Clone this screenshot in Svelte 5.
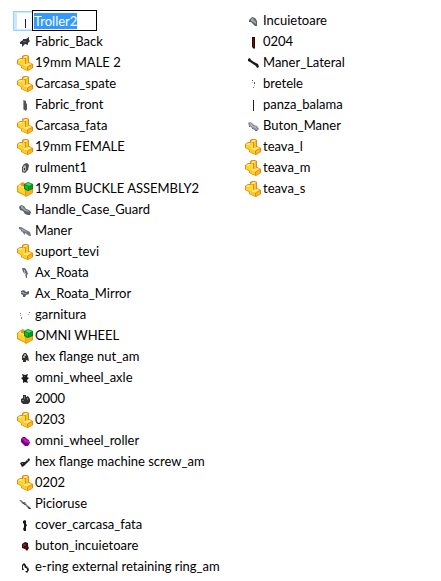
<script lang="ts">
  import { onMount } from 'svelte'

  type Shape = { d: string; fill: string }
  type Item = { name: string; icon: string }

  const icons: Record<string, Shape[]> = {
    part: [
      { d: 'M0 5L3 3H5V1L7 0H10L12 1V7L16 9V13L11 16L8 15L4 13V11L0 9Z', fill: '#e08c10' },
      { d: 'M1 5L5 4L8 4V10H5V12L4 10L1 9Z', fill: '#ffd32f' },
      { d: 'M1 5L4 4H5V5L3 6Z', fill: '#fff0a8' },
      { d: 'M6 2L8 1H10L11 2L9 3H7Z', fill: '#fff0a8' },
      { d: 'M6 3L8 4V9L6 8Z', fill: '#ffdc45' },
      { d: 'M9 3L11 2V8L9 9Z', fill: '#fdc422' },
      { d: 'M5 10L8 9L12 8L15 9L11 11L10 12Z', fill: '#ffe878' },
      { d: 'M5 10L10 12V15L5 13Z', fill: '#ffcc22' },
      { d: 'M11 12L15 10V13L11 15Z', fill: '#ffb81a' }
    ],
    assembly: [
      { d: 'M0 5L4 2L6 1L8 3L12 2L16 4V12L9 16L8 15L0 11Z', fill: '#e39a10' },
      { d: 'M1 5L8 8V14L1 10Z', fill: '#ffd52e' },
      { d: 'M1 5L4 3V5L8 6V8Z', fill: '#fff08c' },
      { d: 'M9 10L15 8V12L9 15Z', fill: '#fbb017' },
      { d: 'M7 3L11 1L16 3V8L11 10L7 8Z', fill: '#07851b' },
      { d: 'M8 3L11 2L15 3L12 5Z', fill: '#42e163' },
      { d: 'M8 4L11 5V9L8 7Z', fill: '#12b936' },
      { d: 'M12 5L15 4V7L12 9Z', fill: '#079b25' }
    ],
    trolley: [{ d: 'M8 6H9V15H8Z', fill: '#222222' }],
    blade: [{ d: 'M8 3H9V14H8Z', fill: '#222222' }],
    fabricBack: [
      { d: 'M3 8L6 6V5H9L12 3V6L13 7L11 9V11L8 10L5 13V10H3Z', fill: '#30343c' },
      { d: 'M6 7H9V8H6Z', fill: '#646b78' }
    ],
    fabricFront: [
      { d: 'M6 3L9 4V6L10 7V12L9 14L6 12Z', fill: '#50545e' },
      { d: 'M6 3H7V12H6Z', fill: '#9599a5' }
    ],
    bearing: [
      { d: 'M5 7L7 4L10 3L12 5L11 10L8 13L5 12Z', fill: '#4d4d4d' },
      { d: 'M6 7L8 5L9 6V10L7 12L6 11Z', fill: '#b9b9b9' },
      { d: 'M7 8H8V10H7Z', fill: '#333333' }
    ],
    guard: [
      { d: 'M2 5L4 3L7 4L9 7L12 8L14 10L13 13H11L8 12L6 9L3 8Z', fill: '#5d606e' },
      { d: 'M4 4H6V5L9 8L12 9V10L8 9L4 6Z', fill: '#a3a7b5' }
    ],
    handle: [
      { d: 'M2 4H4L6 5L9 7L13 9L14 13H12L11 12L8 10V12L6 10L5 8L4 9V7L2 6Z', fill: '#747786' },
      { d: 'M4 5L7 7L11 10L9 9L5 7Z', fill: '#b2b5c0' }
    ],
    axle: [
      { d: 'M5 3L8 3L10 6L11 9L10 10V13H9L8 9L6 7Z', fill: '#686c79' },
      { d: 'M7 5H8V8H9V10H8V8H7Z', fill: '#b2b6bf' }
    ],
    axleMirror: [
      { d: 'M4 5L7 4L9 6L12 5V8L9 9L8 11H6V9L4 8Z', fill: '#5c606c' },
      { d: 'M4 6H7V7H9V8H6V7H4Z', fill: '#989ca8' }
    ],
    gasket: [
      { d: 'M3 6H4V7H3ZM4 10H5V12H4ZM12 5H13V6H12Z', fill: '#777777' },
      { d: 'M3 8H4V9H3ZM11 7H12V8H11Z', fill: '#a4a4a4' }
    ],
    nut: [
      { d: 'M5 7L7 4H9L11 7L12 12L9 11V13H6V11H5Z', fill: '#343330' },
      { d: 'M7 5H9V7H8V9H6V7H7Z', fill: '#a2a199' }
    ],
    wheelAxle: [
      { d: 'M5 4L8 5L11 4L10 7L12 8L10 10L11 13L8 12L6 13V10L4 8L6 7Z', fill: '#191b1b' },
      { d: 'M7 6H8V7H7Z', fill: '#555858' }
    ],
    roller2000: [
      { d: 'M4 8L6 7V4H9V6L11 5L13 8V11L11 13H6L4 11Z', fill: '#303332' },
      { d: 'M7 5H8V8H7ZM5 9H7V10H5ZM10 7H11V9H10Z', fill: '#737877' }
    ],
    purple: [
      { d: 'M4 6L6 4H8L10 6L12 7L13 10L11 13H8L5 10L4 9Z', fill: '#780084' },
      { d: 'M5 6L7 5L10 7L12 8V10L8 9Z', fill: '#c813d0' }
    ],
    screw: [
      { d: 'M3 9L5 8L8 8L10 6L12 4L13 6L10 9L8 11L7 12L5 13L4 11Z', fill: '#202221' },
      { d: 'M5 9H6V10H5ZM10 6H11V7H10Z', fill: '#7d807e' }
    ],
    feet: [
      { d: 'M2 4H4L6 6H8L10 9L14 12V13H12L9 10L7 8L5 7Z', fill: '#747884' },
      { d: 'M5 6L9 9L8 9L5 7ZM10 10L14 13H12Z', fill: '#303640' }
    ],
    cover: [{ d: 'M6 4L8 3L9 4V7L10 8L9 10V14H7L6 12L7 10V7L6 6Z', fill: '#151919' }],
    red: [
      { d: 'M5 6L8 4L11 5V8L12 10L10 13L8 11L5 10Z', fill: '#370b0b' },
      { d: 'M6 6H9V8H7V9H6ZM9 9H10V10H9Z', fill: '#832020' }
    ],
    ring: [
      { d: 'M5 6L7 4L9 6V9H8L7 6L6 7V9L7 11H5ZM9 7L11 8L12 11L10 14L8 12H10V10L9 9Z', fill: '#171818' },
      { d: 'M7 4H8V5H7ZM10 8H11V9H10Z', fill: '#878787' }
    ],
    lock: [
      { d: 'M4 7L7 4L10 5L12 8V13H10L8 11L6 9H4Z', fill: '#5b606b' },
      { d: 'M6 6L8 5L9 7L11 9V11L8 9L6 8Z', fill: '#a1a7b2' }
    ],
    bar: [
      { d: 'M7 3H10V14L9 15L7 13Z', fill: '#280707' },
      { d: 'M8 4H9V13H8Z', fill: '#5c1416' }
    ],
    lateral: [
      { d: 'M3 4L5 3L6 5L9 7L11 8L13 9L14 12L12 13L11 11L8 9L5 7L3 6Z', fill: '#171817' }
    ],
    straps: [
      { d: 'M7 4H8V5H7ZM9 6H10V8H9ZM8 11H9V12H8Z', fill: '#5b5b5b' },
      { d: 'M7 6H8V7H7ZM9 9H10V10H9Z', fill: '#c0c0c0' }
    ],
    button: [
      { d: 'M3 5L5 4L7 5L9 7L12 8L14 11L12 13L9 12L6 9L4 8Z', fill: '#8b8f9d' },
      { d: 'M5 5L8 8L11 9L12 11L8 9L5 7Z', fill: '#b8bbc7' },
      { d: 'M4 8H5V9H4ZM7 10H8V11H7ZM10 12H12V13H10Z', fill: '#636773' }
    ]
  }

  const columns: Item[][] = [
    [
      { name: 'Troller2', icon: 'trolley' },
      { name: 'Fabric_Back', icon: 'fabricBack' },
      { name: '19mm MALE 2', icon: 'part' },
      { name: 'Carcasa_spate', icon: 'part' },
      { name: 'Fabric_front', icon: 'fabricFront' },
      { name: 'Carcasa_fata', icon: 'part' },
      { name: '19mm FEMALE', icon: 'part' },
      { name: 'rulment1', icon: 'bearing' },
      { name: '19mm BUCKLE ASSEMBLY2', icon: 'assembly' },
      { name: 'Handle_Case_Guard', icon: 'guard' },
      { name: 'Maner', icon: 'handle' },
      { name: 'suport_tevi', icon: 'part' },
      { name: 'Ax_Roata', icon: 'axle' },
      { name: 'Ax_Roata_Mirror', icon: 'axleMirror' },
      { name: 'garnitura', icon: 'gasket' },
      { name: 'OMNI WHEEL', icon: 'assembly' },
      { name: 'hex flange nut_am', icon: 'nut' },
      { name: 'omni_wheel_axle', icon: 'wheelAxle' },
      { name: '2000', icon: 'roller2000' },
      { name: '0203', icon: 'part' },
      { name: 'omni_wheel_roller', icon: 'purple' },
      { name: 'hex flange machine screw_am', icon: 'screw' },
      { name: '0202', icon: 'part' },
      { name: 'Picioruse', icon: 'feet' },
      { name: 'cover_carcasa_fata', icon: 'cover' },
      { name: 'buton_incuietoare', icon: 'red' },
      { name: 'e-ring external retaining ring_am', icon: 'ring' }
    ],
    [
      { name: 'Incuietoare', icon: 'lock' },
      { name: '0204', icon: 'bar' },
      { name: 'Maner_Lateral', icon: 'lateral' },
      { name: 'bretele', icon: 'straps' },
      { name: 'panza_balama', icon: 'blade' },
      { name: 'Buton_Maner', icon: 'button' },
      { name: 'teava_l', icon: 'part' },
      { name: 'teava_m', icon: 'part' },
      { name: 'teava_s', icon: 'part' }
    ]
  ]

  let fileName = $state(columns[0][0].name)
  let renameBox: HTMLInputElement

  onMount(() => {
    renameBox.focus()
    renameBox.select()
  })
</script>

{#snippet fileIcon(name: string)}
  <svg class="icon" viewBox="0 0 16 16" aria-hidden="true">
    {#each icons[name] as shape}
      <path d={shape.d} fill={shape.fill} />
    {/each}
  </svg>
{/snippet}

<main class="files">
  {#each columns as items, c}
    <ul class="column">
      {#each items as item, i}
        {#if c === 0 && i === 0}
          <li class="row editing">
            <span class="thumb">{@render fileIcon(item.icon)}</span>
            <input bind:this={renameBox} bind:value={fileName} aria-label="File name" spellcheck="false" />
          </li>
        {:else}
          <li class="row">
            {@render fileIcon(item.icon)}
            <span class="name">{item.name}</span>
          </li>
        {/if}
      {/each}
    </ul>
  {/each}
</main>

<style>
  :global(body) {
    margin: 0;
    background: #fff;
  }

  .files {
    display: grid;
    grid-template-columns: 228px 1fr;
    padding: 10px 0 4px 13px;
    color: #000;
    font: 13px/21px Lato, 'Noto Sans', sans-serif;
  }

  .column {
    list-style: none;
    margin: 0;
    padding: 0;
  }

  .row {
    display: flex;
    align-items: center;
    gap: 2px;
    height: 21px;
    padding-left: 4px;
    white-space: nowrap;
  }

  .icon {
    display: block;
    flex: none;
    width: 16px;
    height: 16px;
  }

  .editing {
    gap: 0;
    padding-left: 0;
  }

  .thumb {
    box-sizing: border-box;
    height: 20px;
    padding: 1px 0 1px 3px;
    border: 1px solid #99d1ff;
    border-right: 0;
    background: #cce8ff;
  }

  .thumb .icon {
    background: #fff;
  }

  input {
    box-sizing: border-box;
    width: 65px;
    height: 21px;
    margin-left: -1px;
    padding: 0 1px;
    border: 1px solid #000;
    border-radius: 0;
    outline: none;
    background: #fff;
    color: #000;
    font: inherit;
    line-height: 15px;
  }

  input::selection {
    background: #3399ff;
    color: #fff;
  }
</style>
